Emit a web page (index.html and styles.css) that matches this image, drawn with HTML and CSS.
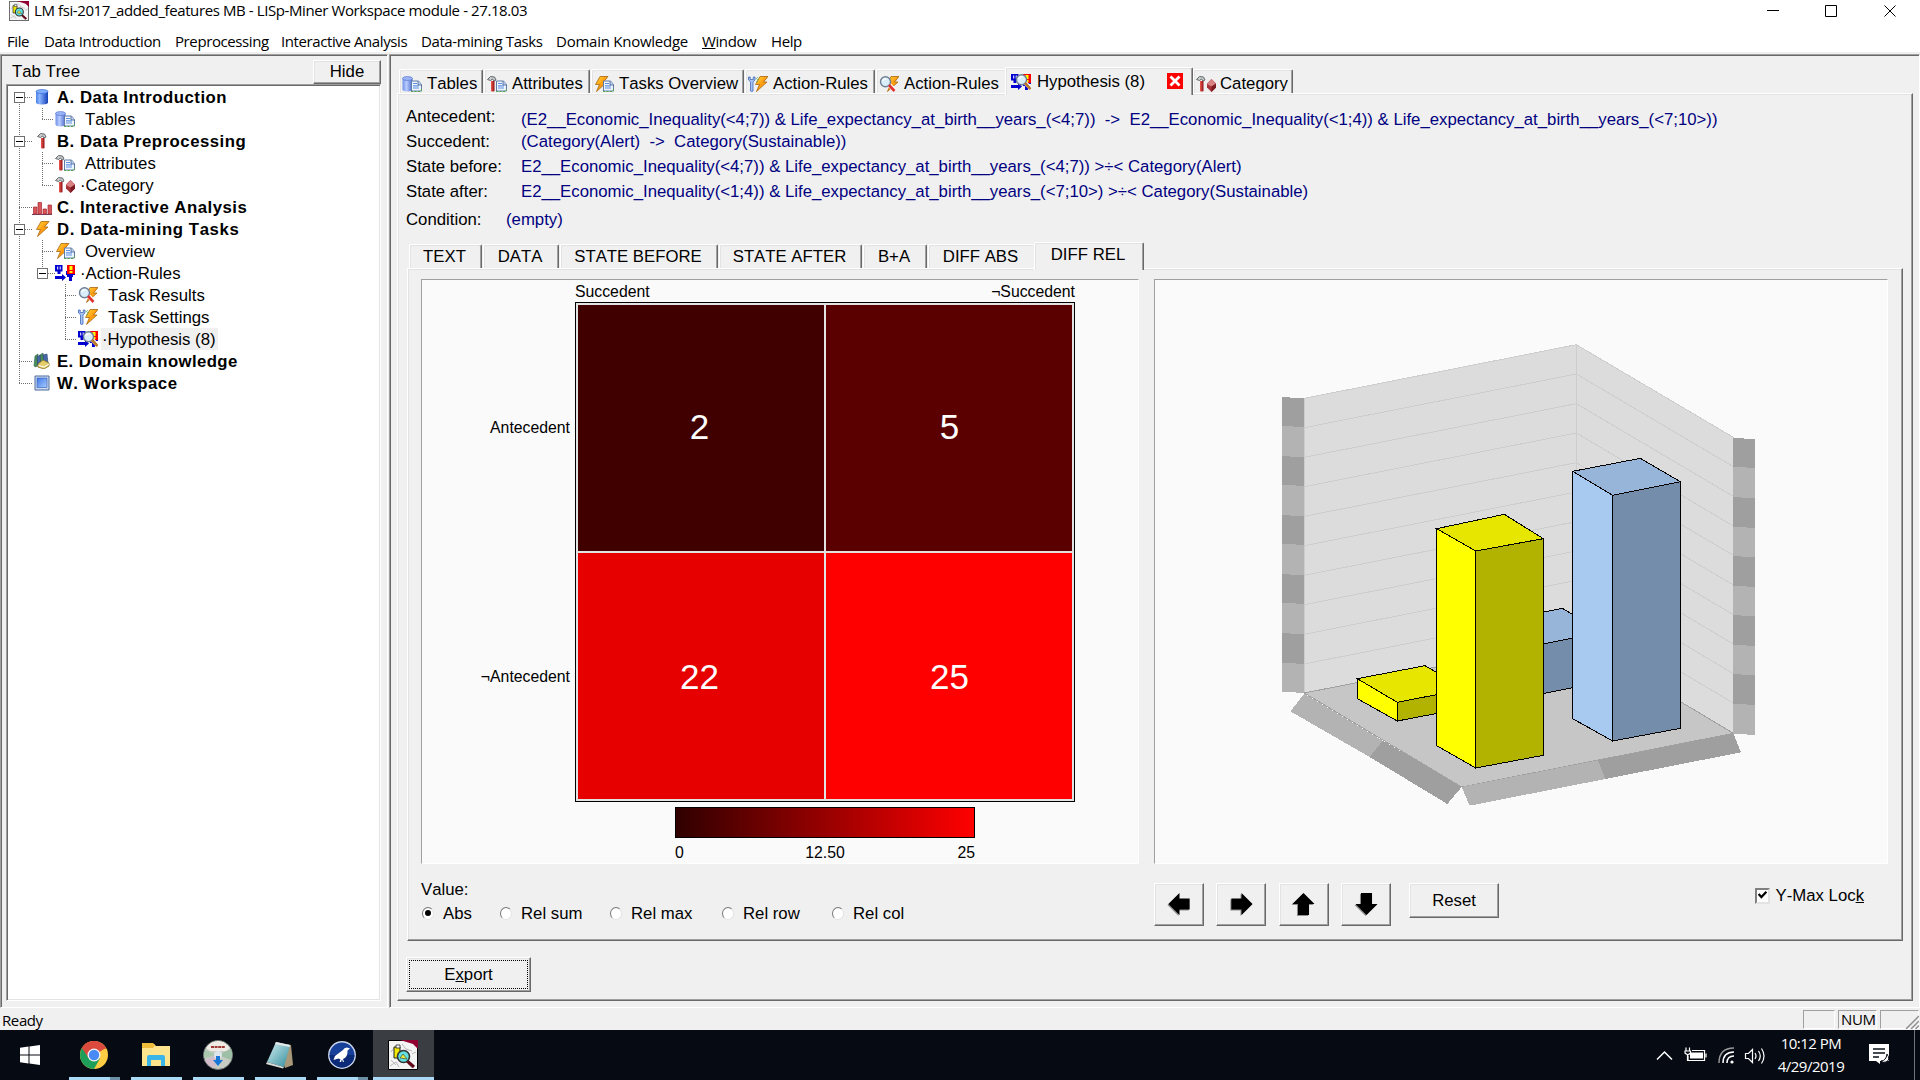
FILE: index.html
```html
<!DOCTYPE html>
<html lang="en">
<head>
<meta charset="utf-8">
<title>LM fsi-2017_added_features MB - LISp-Miner Workspace module</title>
<link rel="stylesheet" href="styles.css">
</head>
<body>
<svg class="defs" width="0" height="0">
  <defs>
    <linearGradient id="gBlue" x1="0" x2="1" y1="0" y2="0"><stop offset="0" stop-color="#4a80e8"/><stop offset=".3" stop-color="#8ab4ff"/><stop offset="1" stop-color="#1440b8"/></linearGradient>
    <linearGradient id="gPale" x1="0" x2="1" y1="0" y2="0"><stop offset="0" stop-color="#6f90e8"/><stop offset=".4" stop-color="#b8ccff"/><stop offset="1" stop-color="#4a68cc"/></linearGradient>
    <linearGradient id="gBolt" x1="0" x2="1" y1="0" y2="1"><stop offset="0" stop-color="#ffe040"/><stop offset=".5" stop-color="#ff9a10"/><stop offset="1" stop-color="#ffcf30"/></linearGradient>
    <linearGradient id="gRed" x1="0" x2="1" y1="0" y2="0"><stop offset="0" stop-color="#f05a50"/><stop offset="1" stop-color="#8c1014"/></linearGradient>
    <linearGradient id="gScreen" x1="0" x2="1" y1="0" y2="1"><stop offset="0" stop-color="#3f78e8"/><stop offset="1" stop-color="#a9ccff"/></linearGradient>
    <linearGradient id="gNote" x1="0" x2="1" y1="0" y2="1"><stop offset="0" stop-color="#d8f0f2"/><stop offset="1" stop-color="#2e8c9c"/></linearGradient>
  </defs>
  <symbol id="doc" viewBox="0 0 20 16"><path d="M9.500 5h7l3 3.500v6.500h-10z" fill="#eef5ff" stroke="#5d7ba6"/><path d="M16 5v4h4" fill="#bcd0ee" stroke="#46618c" stroke-width=".8"/><path d="M11 7.500h4M11 9.800h6M11 12h6" stroke="#5f8fe0" stroke-width="1.200"/><path d="M9 15.500h10l1-4" fill="none" stroke="#56a845" stroke-dasharray="2 1.500"/></symbol>
  <symbol id="hammer" viewBox="0 0 20 16"><path d="M.5 3.500l3-3 4 .5 1.500 3-2 1-1.500-2-2 1.500z" fill="#c9cccd" stroke="#555b5e" stroke-width=".9"/><path d="M4 5h3.500v10q-1.800 1-3.500 0z" fill="url(#gRed)"/></symbol>
  <symbol id="bolt" viewBox="0 0 20 16"><path d="M6 .5h8L9.500 6H13L2.500 15.500 5.500 8.500H1.500z" fill="url(#gBolt)" stroke="#a8660c" stroke-width=".8"/></symbol>
  <symbol id="glass" viewBox="0 0 20 16"><path d="M10 8.500l6 6" stroke="#fff" stroke-width="4"/><circle cx="6.500" cy="5.800" r="5" fill="#d9eefa" stroke="#6e7f95" stroke-width="1.400"/><path d="M3.500 5q1-2.500 4-2" fill="none" stroke="#fff" stroke-width="1.300"/></symbol>
  <symbol id="i-db" viewBox="0 0 20 16"><path d="M4 2.500v11c0 1.300 2.700 2 6 2s6-.7 6-2v-11z" fill="url(#gBlue)"/><ellipse cx="10" cy="2.500" rx="6" ry="2" fill="#7fb0ff" stroke="#2c5fd0" stroke-width=".6"/></symbol>
  <symbol id="i-tables" viewBox="0 0 20 16"><path d="M.5 2.500v11c0 1.300 2.200 2 5 2s5-.7 5-2v-11z" fill="url(#gPale)"/><ellipse cx="5.500" cy="2.500" rx="5" ry="2" fill="#9ab4f6" stroke="#4d6cce" stroke-width=".6"/><use href="#doc"/></symbol>
  <symbol id="i-hammer" viewBox="0 0 20 16"><use href="#hammer" x="5"/></symbol>
  <symbol id="i-attr" viewBox="0 0 20 16"><use href="#hammer"/><use href="#doc"/></symbol>
  <symbol id="i-cat" viewBox="0 0 20 16"><use href="#hammer"/><path d="M15.500 3l4.500 4.500v4l-4.500 4.500-4.500-4.500v-4z" fill="#a8323a"/><path d="M15.500 3l-4.500 5 4.500 2.500 4.500-2.500z" fill="#d98284"/><path d="M15.500 10.500v5.500l4.500-4.500v-4z" fill="#7c1c22"/></symbol>
  <symbol id="i-bars" viewBox="0 0 20 16"><path d="M1.500 15V8H5v7zM6 15V3.500h3.500V15zM11 15v-5h3.500v5zM16 15V6h3.500v9z" fill="#d9555a" stroke="#a52a30" stroke-width=".7"/><path d="M0 15.500h20" stroke="#7d3a55"/></symbol>
  <symbol id="i-bolt" viewBox="0 0 20 16"><use href="#bolt" x="3"/></symbol>
  <symbol id="i-over" viewBox="0 0 20 16"><use href="#bolt"/><use href="#doc"/></symbol>
  <symbol id="rules" viewBox="0 0 20 16"><path d="M0 0h7.500v6.500H5.500V9H2.500V6.500H0z" fill="#0000d0"/><path d="M2.200 1.500h1v3h-1zM4.700 1.500h1v3h-1z" fill="#fff"/><path d="M0 11h7V9l4 3.500L7 16v-2H0z" fill="#0000d0"/><path d="M11 6h9v4h-2v2h-1v4h-3v-4h-2v-2h-1z" fill="#0000d0"/><path d="M12 0h8v9h-8z" fill="#f00"/><path d="M14.500 1h3v4h-3zM14.500 6h3v2h-3z" fill="#ff0"/></symbol>
  <symbol id="i-rules" viewBox="0 0 20 16"><use href="#rules"/></symbol>
  <symbol id="i-results" viewBox="0 0 20 16"><use href="#bolt" x="6"/><use href="#glass"/><path d="M10 9l5.500 6" stroke="#e03030" stroke-width="2.600"/></symbol>
  <symbol id="i-settings" viewBox="0 0 20 16"><use href="#bolt" x="6"/><path d="M.5 1v3l2 1.800V15q1.200 1 2.500 0V5.800L7 4V1H5.300v2.500H2.200V1z" fill="#a9c4f5" stroke="#3e68b8" stroke-width=".8"/><path d="M8 3l2-2M9 6l1-3" stroke="#3fae3a" stroke-dasharray="1 1"/></symbol>
  <symbol id="i-hyp" viewBox="0 0 20 16"><use href="#rules"/><use href="#glass" x="4"/><path d="M14 9l5.500 6" stroke="#b8782c" stroke-width="2.600"/></symbol>
  <symbol id="i-books" viewBox="0 0 20 16"><path d="M3 3l3-2v11l-2 2-2-1zM8 2l3-2 1 9-5 4z" fill="#4a9058" stroke="#2c5d50" stroke-width=".6"/><path d="M5 4l3-2 1 11-3 1zM11 2l4-1 1 9-4 1z" fill="#4768a8" stroke="#2b406e" stroke-width=".6"/><path d="M6 11l5-4 6 3v3l-5 3-6-2z" fill="#e6cd6c" stroke="#8c7322" stroke-width=".8"/><path d="M6.500 12.500l5.500 1.500 5-3" fill="none" stroke="#fff"/></symbol>
  <symbol id="i-screen" viewBox="0 0 20 16"><path d="M3 1h14v14H3z" fill="#cfdcef" stroke="#4d6a9c"/><path d="M5 3h10v9.500H5z" fill="url(#gScreen)" stroke="#2f58b8" stroke-width=".6"/></symbol>
  <symbol id="i-lm" viewBox="0 0 30 30"><path d="M.5.500h29v29H.5z" fill="#f4f4f4" stroke="#000"/><path d="M12 0h18v9l-5-5z" fill="#900030"/><path d="M3 20l5 5M14 4l4 5 6 2M3 12l3-4M20 24l4 4M2 26l6-4 3 5M24 14l4-2" stroke="#b8b8b8" fill="none"/><path d="M6 7h6v11H6z" fill="#f0e800" stroke="#222"/><path d="M8 5h4v3H8z" fill="#fff" stroke="#222" stroke-width=".8"/><path d="M18 20l8 7" stroke="#600818" stroke-width="3"/><circle cx="15.500" cy="16.500" r="6" fill="#62e0e0" stroke="#333" stroke-width="1.600"/><path d="M12 18l3-4 4 5z" fill="#e8e83c" stroke="#333" stroke-width=".6"/></symbol>
</svg>

<header class="titlebar">
  <svg class="title-icon" width="20" height="20"><use href="#i-lm"/></svg>
  <span class="title-text">LM fsi-2017_added_features MB - LISp-Miner Workspace module - 27.18.03</span>
  <svg class="caption" width="130" height="20" viewBox="0 0 130 20" fill="none" stroke="#000"><path d="M0 9.500h12M58.500 4.500h11v11h-11zM117.500 4.500l11 11M128.500 4.500l-11 11"/></svg>
</header>
<nav class="menubar">
  <span>File</span><span>Data Introduction</span><span>Preprocessing</span><span>Interactive Analysis</span><span>Data-mining Tasks</span><span class="wide">Domain Knowledge</span><span><u>W</u>indow</span><span>Help</span>
</nav>

<main class="workspace">
  <aside class="pane tree-pane">
    <div class="tree-head"><span>Tab Tree</span><button class="btn hide-btn">Hide</button></div>
    <div class="tree">
      <svg class="tree-lines" width="90" height="310" viewBox="0 0 90 310" shape-rendering="crispEdges" fill="none">
        <path d="M11.500 16v282M34.500 22v11M34.500 66v33M34.500 154v28M57.500 198v55" stroke="#707070" stroke-dasharray="1 1"/>
        <path d="M17 11.500h7M34 33.500h12M17 55.500h7M34 77.500h12M34 99.500h12M11 121.500h13M17 143.500h7M34 165.500h12M40 187.500h7M57 209.500h12M57 231.500h12M57 253.500h12M11 275.500h13M11 297.500h13" stroke="#707070" stroke-dasharray="1 1"/>
        <path d="M6.500 6.500h10v10h-10zM6.500 50.500h10v10h-10zM6.500 138.500h10v10h-10zM29.500 182.500h10v10h-10z" fill="#fff" stroke="#707070"/>
        <path d="M8 11.500h7M8 55.500h7M8 143.500h7M31 187.500h7" stroke="#000"/>
      </svg>
      <div class="row top"><svg><use href="#i-db"/></svg><span>A. Data Introduction</span></div>
      <div class="row sub"><svg><use href="#i-tables"/></svg><span>Tables</span></div>
      <div class="row top"><svg><use href="#i-hammer"/></svg><span>B. Data Preprocessing</span></div>
      <div class="row sub"><svg><use href="#i-attr"/></svg><span>Attributes</span></div>
      <div class="row sub dot"><svg><use href="#i-cat"/></svg><span>·Category</span></div>
      <div class="row top"><svg><use href="#i-bars"/></svg><span>C. Interactive Analysis</span></div>
      <div class="row top wide"><svg><use href="#i-bolt"/></svg><span>D. Data-mining Tasks</span></div>
      <div class="row sub"><svg><use href="#i-over"/></svg><span>Overview</span></div>
      <div class="row sub dot"><svg><use href="#i-rules"/></svg><span>·Action-Rules</span></div>
      <div class="row leaf"><svg><use href="#i-results"/></svg><span>Task Results</span></div>
      <div class="row leaf"><svg><use href="#i-settings"/></svg><span>Task Settings</span></div>
      <div class="row leaf dot"><svg><use href="#i-hyp"/></svg><span class="selected">·Hypothesis (8)</span></div>
      <div class="row top tight"><svg><use href="#i-books"/></svg><span>E. Domain knowledge</span></div>
      <div class="row top"><svg><use href="#i-screen"/></svg><span>W. Workspace</span></div>
    </div>
  </aside>

  <section class="pane main-pane">
    <div class="tabs outer-tabs">
      <div class="tab w84"><svg><use href="#i-tables"/></svg><span>Tables</span></div>
      <div class="tab w106"><svg><use href="#i-attr"/></svg><span>Attributes</span></div>
      <div class="tab w153"><svg><use href="#i-over"/></svg><span>Tasks Overview</span></div>
      <div class="tab w130"><svg><use href="#i-settings"/></svg><span>Action-Rules</span></div>
      <div class="tab w129 open"><svg><use href="#i-results"/></svg><span>Action-Rules</span></div>
      <div class="tab w188 active"><svg><use href="#i-hyp"/></svg><span>Hypothesis (8)</span>
        <svg class="close" viewBox="0 0 16 16"><path d="M0 0h16v16H0z" fill="#f00"/><path d="M3.500 3.500l9 9M12.500 3.500l-9 9" stroke="#fff" stroke-width="2.800"/></svg></div>
      <div class="tab w100"><svg><use href="#i-cat"/></svg><span class="clip">Category</span></div>
    </div>
    <div class="page outer-page">
      <div class="rule">
        <span>Antecedent:</span><b class="drop">(E2__Economic_Inequality(&lt;4;7)) &amp; Life_expectancy_at_birth__years_(&lt;4;7))&nbsp; -&gt;&nbsp; E2__Economic_Inequality(&lt;1;4)) &amp; Life_expectancy_at_birth__years_(&lt;7;10&gt;))</b>
        <span>Succedent:</span><b>(Category(Alert)&nbsp; -&gt;&nbsp; Category(Sustainable))</b>
        <span>State before:</span><b>E2__Economic_Inequality(&lt;4;7)) &amp; Life_expectancy_at_birth__years_(&lt;4;7)) &gt;÷&lt; Category(Alert)</b>
        <span>State after:</span><b>E2__Economic_Inequality(&lt;1;4)) &amp; Life_expectancy_at_birth__years_(&lt;7;10&gt;) &gt;÷&lt; Category(Sustainable)</b>
        <span>Condition:</span><b class="empty">(empty)</b>
      </div>
      <div class="tabs inner-tabs">
        <div class="tab w73">TEXT</div><div class="tab w76">DATA</div><div class="tab w158">STATE BEFORE</div><div class="tab w143">STATE AFTER</div><div class="tab w64">B+A</div><div class="tab w106 open">DIFF ABS</div><div class="tab w110 active">DIFF REL</div>
      </div>
      <div class="page inner-page">
        <div class="panel heat">
          <div class="col-labels"><span>Succedent</span><span>¬Succedent</span></div>
          <div class="row-labels"><span>Antecedent</span><span>¬Antecedent</span></div>
          <div class="matrix"><div class="c2">2</div><div class="c5">5</div><div class="c22">22</div><div class="c25">25</div></div>
          <div class="legend"><div class="ramp"></div><div class="ticks"><span>0</span><span>12.50</span><span>25</span></div></div>
        </div>
        <div class="panel chart">
          <svg width="520" height="490" viewBox="0 0 1560 1470" shape-rendering="crispEdges">
            <path d="M133 205L949 44V928L133 1089zM949 44L1420 322V1210L949 928z" fill="#dcdcdc" stroke="#cdcdcd" stroke-width="3"/>
            <path d="M133 293L949 132L1420 410M133 382L949 221L1420 499M133 470L949 309L1420 588M133 559L949 398L1420 676M133 647L949 486L1420 765M133 736L949 575L1420 854M133 824L949 663L1420 942M133 913L949 751L1420 1031M133 1002L949 840L1420 1119" fill="none" stroke="#cdcdcd" stroke-width="3"/>
            <path d="M133 1089L949 928L1420 1210L605 1371z" fill="#c6c6c6" stroke="#a0a0a0" stroke-width="3"/>
            <path d="M66 201V1085L132 1089V205zM1419 324V1211L1485 1215V327z" fill="#b3b3b3"/>
            <path d="M66 201l66 4v86l-66-3zM66 378l66 4v86l-66-4zM66 555l66 4v86l-66-4zM66 732l66 4v86l-66-4zM66 909l66 4v89l-66-4zM1419 324l66 3v87l-66-4zM1419 501l66 4v89l-66-4zM1419 678l66 4v89l-66-4zM1419 855l66 4v89l-66-4zM1419 1032l66 4v89l-66-4z" fill="#9f9f9f"/>
            <path d="M133 1091L91 1144L329 1281L368 1232zM605 1371L629 1427L1036 1347L1014 1291z" fill="#b3b3b3"/>
            <path d="M368 1232L329 1281L562 1422L605 1371zM1014 1291L1036 1347L1443 1267L1420 1210z" fill="#9f9f9f"/>
            <g stroke="#000" stroke-width="3">
              <path d="M703 876L907 835L1028 906L824 947z" fill="#96b5d9"/><path d="M824 947L1028 906V1055L824 1096z" fill="#748daa"/>
              <path d="M292 1046L495 1007L616 1077L412 1117z" fill="#e6e600"/><path d="M292 1046L412 1117V1173L292 1106z" fill="#ff0"/><path d="M412 1117L616 1077V1134L412 1173z" fill="#b2b200"/>
              <path d="M938 424L1141 385L1261 455L1058 496z" fill="#96b5d9"/><path d="M938 424L1058 496V1233L938 1166z" fill="#a8caf0"/><path d="M1058 496L1261 455V1195L1058 1233z" fill="#748daa"/>
              <path d="M530 596L733 553L850 626L647 663z" fill="#e6e600"/><path d="M530 596L647 663V1314L530 1247z" fill="#ff0"/><path d="M647 663L850 626V1276L647 1314z" fill="#b2b200"/>
            </g>
          </svg>
        </div>
        <div class="value">
          <div>Value:</div>
          <div class="radios"><label class="w78"><i class="radio on"></i>Abs</label><label class="w110"><i class="radio"></i>Rel sum</label><label class="w112"><i class="radio"></i>Rel max</label><label class="w110"><i class="radio"></i>Rel row</label><label><i class="radio"></i>Rel col</label></div>
        </div>
        <div class="tools">
          <button class="btn arrow"><svg viewBox="0 0 26 26"><path d="M1 13L13 1v6h11v12H13v6z"/></svg></button>
          <button class="btn arrow"><svg viewBox="0 0 26 26"><path d="M25 13L13 1v6H2v12h11v6z"/></svg></button>
          <button class="btn arrow"><svg viewBox="0 0 26 26"><path d="M13 1L25 13h-6v12H7V13H1z"/></svg></button>
          <button class="btn arrow"><svg viewBox="0 0 26 26"><path d="M13 25L25 13h-6V1H7v12H1z"/></svg></button>
          <button class="btn reset">Reset</button>
          <label class="lock"><i class="check"><svg viewBox="0 0 9 9"><path d="M1 3.500l2.500 2.800L8 1.500" fill="none" stroke="#000" stroke-width="2"/></svg></i>Y-Max Loc<u>k</u></label>
        </div>
      </div>
      <button class="btn export"><span>E<u>x</u>port</span></button>
    </div>
  </section>
</main>

<footer class="status"><span class="ready">Ready</span><span class="cell w32"></span><span class="cell w39">NUM</span><span class="cell w39"><svg width="14" height="14" viewBox="0 0 14 14" stroke="#909090" stroke-width="1.500"><path d="M1 14L14 1M6 14l8-8M10.500 14l3.500-3.500"/></svg></span></footer>

<div class="taskbar">
  <div class="task start"><svg width="20" height="20" viewBox="0 0 20 20"><path d="M0 2.800L8.500 1.600V9.500H0zM9.500 1.500L20 0v9.500H9.500zM0 10.500h8.500v8L0 17.200zM9.500 10.500H20V20L9.500 18.600z" fill="#fff"/></svg></div>
  <div class="task run multi"><svg width="28" height="28" viewBox="0 0 28 28"><circle cx="14" cy="14" r="14" fill="#fc4"/><path d="M14 14L1.900 7A14 14 0 0 1 26.100 7z" fill="#db4a3c"/><path d="M14 14L1.900 7A14 14 0 0 0 14 28l6-10.500z" fill="#1e9e58"/><path d="M14 7.500h12.300Q22 0 14 0 6 0 1.900 7L8.500 17z" fill="#db4a3c"/><circle cx="14" cy="14" r="6.500" fill="#f4f4f4"/><circle cx="14" cy="14" r="5.200" fill="#4a8af4"/></svg></div>
  <div class="task run"><svg width="28" height="24" viewBox="0 0 28 24"><path d="M0 1h12l2 2h14v20H0z" fill="#ffe48e"/><path d="M0 0h11l2 2-2 3H0z" fill="#f0bc3c"/><path d="M5 23V14q0-2 2-2h14q2 0 2 2v9h-4v-6H9v6z" fill="#3bb4e8"/></svg></div>
  <div class="task run"><svg width="30" height="30" viewBox="0 0 30 30"><circle cx="15" cy="15" r="14.500" fill="#c6cbc4" stroke="#6a706c"/><path d="M15 15L2 20A14 14 0 0 0 12 28z" fill="#d2bccb"/><path d="M15 15L28 9a14 14 0 0 1 0 11z" fill="#9dbfa6"/><path d="M15 15L2 10a14 14 0 0 0-1 8z" fill="#a9c8ae"/><path d="M3 8Q8 1 15 1t12 7l-4 3H7z" fill="#efeae4"/><path d="M8 7h14" stroke="#a03a34" stroke-width="2" stroke-dasharray="3 .6"/><circle cx="15" cy="15" r="4" fill="#dde5ea"/><path d="M13 16h4v4h3l-5 6-5-6h3z" fill="#1878d8"/></svg></div>
  <div class="task run"><svg width="28" height="28" viewBox="0 0 28 28"><path d="M10 2l15 2 2 20-8 3z" fill="#a8987a"/><path d="M10 1l14 3-6 22L1 21z" fill="url(#gNote)"/><path d="M10 1l14 3-.5 2L9 3z" fill="#e4e8e8"/><path d="M1 21l17 5-1 1.500L0 23z" fill="#d8dcd8"/></svg></div>
  <div class="task run multi"><svg width="28" height="28" viewBox="0 0 28 28"><circle cx="14" cy="14" r="13.200" fill="#17409a" stroke="#c8d4ec" stroke-width="1.500"/><path d="M1.500 14a12.500 12.500 0 0 0 25 0z" fill="#0b2a78"/><path d="M22 7.500l-3-1q-3 0-4 2.500L7 15l-1.500 4 5-1.500 2 1-1 2.500h1.500l1-2.500 1 2.500h1l-1-3q5-2 4.500-8.500z" fill="#fff"/></svg></div>
  <div class="task run current"><svg width="30" height="30"><use href="#i-lm"/></svg></div>
  <div class="tray">
    <svg width="110" height="24" viewBox="0 0 110 24" fill="none" stroke="#fff" stroke-width="1.500"><path d="M1 16.500L8.500 9l7.500 7.500"/><path d="M36 7.500h12.500v10H32v-5M50 10.500v4" stroke-width="1.200"/><path d="M34 9.500h13v6H34z" fill="#fff" stroke="none"/><path d="M30 4.500v3M33.500 4.500v3M29 8h5.500v2q-2.700 3-5.500 0zM31.500 12v6" stroke-width="1.200"/><path d="M63 20q0-15 15-15" stroke="#999"/><path d="M67 20q0-11 11-11M71 20q0-7 7-7"/><circle cx="76" cy="19" r="1.600" fill="#fff" stroke="none"/><path d="M89.500 10.500h3l4-4v13l-4-4h-3zM99 10q2 3 0 6M102.500 8q3.500 5 0 10M105.500 5.500q5 7.500 0 15" stroke-width="1.200"/></svg>
    <div class="clock"><span>10:12 PM</span><span>4/29/2019</span></div>
    <svg class="action" width="22" height="22" viewBox="0 0 22 22"><path d="M0 0h20v17h-9v3l-4-3H0z" fill="#fff"/><path d="M4 5h12M4 9h12M4 13h6" stroke="#0a0f18" stroke-width="1.500"/><path d="M18 10q4 6-1 8-3 1-5-1 5 0 6-7z" fill="#fff" stroke="#0a0f18"/></svg>
  </div>
</div>
</body>
</html>
```
FILE: styles.css
```css
* { box-sizing: border-box; }
body { margin: 0; width: 1920px; height: 1080px; overflow: hidden; display: flex; flex-direction: column; background: #f0f0f0; color: #000; font: 16.75px/20px "Liberation Sans", Arial, sans-serif; font-kerning: none; white-space: nowrap; }
svg { flex: none; display: block; }
.defs { position: absolute; }

.titlebar { height: 22px; flex: none; background: #fff; display: flex; align-items: center; padding-left: 9px; font: 15px/20px "Open Sans", sans-serif; }
.title-text { margin-left: 5px; letter-spacing: -.4px; padding-bottom: 2px; }
.title-icon { margin-bottom: 1px; }
.caption { margin-left: auto; margin-right: 23px; }
.menubar { height: 30px; flex: none; background: #fff; padding: 9px 0 0 7px; display: grid; grid-template-columns: 37px 131px 106px 140px 135px 146px 69px 60px; font: 15px/20px "Open Sans", sans-serif; letter-spacing: -.4px; }
.menubar .wide { letter-spacing: -.25px; }

.workspace { height: 956px; flex: none; padding-top: 2px; display: flex; gap: 1px; }
.pane { border: 1px solid; border-color: #a0a0a0 #fff #fff #a0a0a0; box-shadow: inset 1px 1px #696969; }
.tree-pane { width: 388px; padding: 5px 6px 6px 5px; display: flex; flex-direction: column; }
.main-pane { flex: 1; padding: 12px 6px 6px 7px; }
.tree-head { display: flex; height: 24px; align-items: center; justify-content: space-between; padding-left: 6px; }
.btn { font: inherit; color: #000; background: #f0f0f0; border: 1px solid; border-color: #fff #696969 #696969 #fff; box-shadow: inset -1px -1px #a0a0a0, inset 1px 1px #e3e3e3; padding: 0; border-radius: 0; display: flex; align-items: center; justify-content: center; }
.hide-btn { width: 68px; height: 24px; }

.tree { flex: 1; position: relative; background: #fff; border: 1px solid; border-color: #a0a0a0 #fff #fff #a0a0a0; box-shadow: inset 1px 1px #696969, inset -1px -1px #e3e3e3; padding: 1px; }
.tree-lines { position: absolute; left: 1px; top: 1px; }
.row { height: 22px; display: flex; align-items: center; position: relative; }
.row svg, .tab svg { width: 20px; height: 16px; }
.row span { line-height: 20px; padding-top: 2px; }
.top { padding-left: 24px; font-weight: bold; letter-spacing: .5px; }
.top.wide { letter-spacing: .6px; }
.top.tight { letter-spacing: .4px; }
.top span { margin-left: 5px; }
.sub { padding-left: 47px; }
.leaf { padding-left: 70px; }
.sub span, .leaf span { margin-left: 10px; }
.row.dot span { margin-left: 2px; padding: 2px 2px 0 3px; }
.row.dot .selected { margin-left: 3px; padding: 2px 2px 0 1px; }
.selected { background: #f0f0f0; }

.tabs { display: flex; height: 26px; align-items: flex-end; position: relative; z-index: 1; padding-left: 2px; }
.tab { height: 24px; border: 1px solid #fff; border-right: 1px solid #696969; border-bottom: 0; box-shadow: inset -1px 0 #a0a0a0, inset 1px 1px #e3e3e3; border-radius: 2px 2px 0 0; margin-right: 1px; display: flex; align-items: center; padding-top: 4px; background: #f0f0f0; }
.tab.open { margin-right: 0; border-right: 0; box-shadow: inset 1px 1px #e3e3e3; }
.tab.active { height: 28px; margin: 0 0 -2px; padding-bottom: 4px; }
.outer-tabs .tab { padding-left: 2px; }
.outer-tabs .tab span { margin-left: 5px; }
.outer-tabs .active span { margin-left: 6px; }
.outer-tabs .active { padding-left: 5px; }
.outer-tabs .tab .clip { height: 16px; line-height: 18px; overflow: hidden; margin: -1px 0 0 4px; }
.tab .close { width: 16px; height: 16px; margin-left: 22px; margin-top: -2px; }
.w32 { width: 32px; } .w39 { width: 39px; }
.w64 { width: 64px; } .w73 { width: 73px; } .w76 { width: 76px; } .w78 { width: 78px; }
.w84 { width: 84px; } .w100 { width: 100px; } .w106 { width: 106px; } .w110 { width: 110px; } .w112 { width: 112px; }
.w129 { width: 129px; } .w130 { width: 130px; } .w143 { width: 143px; } .w153 { width: 153px; } .w158 { width: 158px; } .w188 { width: 188px; }

.page { border: 1px solid; border-color: #fff #696969 #696969 #fff; box-shadow: inset -1px -1px #a0a0a0, inset 1px 1px #e3e3e3; }
.outer-page { height: 908px; padding: 13px 9px 0 8px; }
.rule { display: grid; grid-template-columns: 115px 1fr; grid-template-rows: 25px 25px 25px 28px 32px; height: 135px; }
.rule b { font-weight: normal; color: #000080; }
.rule .drop { padding-top: 3px; }
.rule .empty { margin-left: -15px; }
.inner-tabs { margin-left: 1px; }
.inner-tabs .tab { justify-content: center; padding: 1px 2px 0 0; }
.inner-tabs .active { padding-bottom: 4px; }
.inner-page { margin-left: 1px; height: 673px; display: grid; grid-template: 585px 1fr / 718px 734px; column-gap: 15px; padding: 10px 0 0 13px; }
.panel { background: #fafafa; border: 1px solid; border-color: #a0a0a0 #fff #fff #a0a0a0; }
.heat { display: grid; grid-template: 22px 500px 1fr / 153px 500px; font-size: 15.8px; }
.col-labels { grid-column: 2; display: flex; justify-content: space-between; line-height: 20px; padding-top: 2px; }
.row-labels { display: grid; grid-template-rows: 1fr 1fr; align-items: center; justify-items: end; padding: 1px 5px 0 0; }
.matrix { border: 1px solid #000; background: #e3e3e3; padding: 2px; display: grid; grid-template: 1fr 1fr / 1fr 1fr; gap: 2px; color: #fff; font-size: 35px; }
.matrix div { display: flex; align-items: center; justify-content: center; }
.matrix .c2 { background: #400000; padding: 0 3px 2px 0; }
.matrix .c5 { background: #5a0000; padding: 0 0 2px 1px; }
.matrix .c22 { background: #e60000; padding: 1px 3px 0 0; }
.matrix .c25 { background: #f00; padding: 1px 0 0 1px; }
.legend { grid-column: 2; padding: 5px 100px 0; }
.ramp { height: 31px; border: 1px solid #000; background: linear-gradient(90deg, #300000, #f00); }
.ticks { display: grid; grid-template-columns: 1fr auto 1fr; padding-top: 5px; }
.ticks span:last-child { text-align: right; }
.chart { padding: 50px 0 0 105px; }

.value { padding-top: 16px; }
.radios { display: flex; padding-top: 4px; }
.radios label { display: flex; align-items: center; }
.radio { width: 12px; height: 13px; margin: -2px 9px 0 1px; border-radius: 50%; background: #fff; border: 1.500px solid; border-color: #777 #e3e3e3 #e3e3e3 #777; display: flex; align-items: center; justify-content: center; }
.radio.on::before { content: ""; width: 6px; height: 6px; border-radius: 50%; background: #000; }
.tools { display: flex; align-items: flex-start; padding-top: 19px; }
.arrow { width: 50px; height: 43px; margin-right: 12.400px; padding-bottom: 1px; }
.arrow svg { width: 25px; height: 24px; filter: drop-shadow(-1px 1px 0 #909090); }
.reset { width: 90px; height: 35px; margin-left: 5px; padding: 1px 0 0 1px; }
.lock { margin-left: 256px; display: flex; align-items: center; padding-top: 3px; }
.check { width: 15px; height: 16px; margin: -1px 6px 0 0; background: #fff; border: 2px solid; border-color: #808080 #e3e3e3 #e3e3e3 #808080; }
.check svg { width: 11px; height: 10px; }
.export { width: 125px; height: 35px; margin-top: 16px; }
.export span { width: 119px; height: 29px; line-height: 27px; border: 1px dotted #000; }

.status { height: 22px; flex: none; display: flex; padding: 2px 1px 1px 2px; gap: 3px; font: 15px/17px "Open Sans", sans-serif; letter-spacing: -.4px; }
.ready { margin-right: auto; line-height: 20px; }
.cell { height: 19px; border: 1px solid; border-color: #a0a0a0 #fff #fff #a0a0a0; padding-left: 2px; }
.cell svg { margin: 4px 0 0 22px; }

.taskbar { height: 50px; flex: none; background: #060b13; display: flex; color: #fff; }
.task { height: 50px; width: 51px; margin-right: 11px; display: flex; align-items: center; justify-content: center; padding-right: 1px; }
.task.start { width: 60px; margin-right: 9px; padding: 0; }
.run { border-bottom: 3px solid #a9d9f5; padding-top: 3px; }
.multi { border-image: linear-gradient(90deg, #a9d9f5 80%, #6c8fa5 80%) 0 0 3 0; }
.task.current { width: 61px; background: #3a3d42; margin-left: -6px; }
.tray { margin-left: auto; width: 264px; display: flex; align-items: center; }
.clock { width: 90px; text-align: center; display: flex; flex-direction: column; font: 15px/23px "Open Sans", sans-serif; letter-spacing: -.5px; padding-bottom: 1px; }
.action { margin-left: 13px; }
.tray::after { content: ""; width: 1px; height: 50px; background: #70747a; margin-left: 23px; }
```
